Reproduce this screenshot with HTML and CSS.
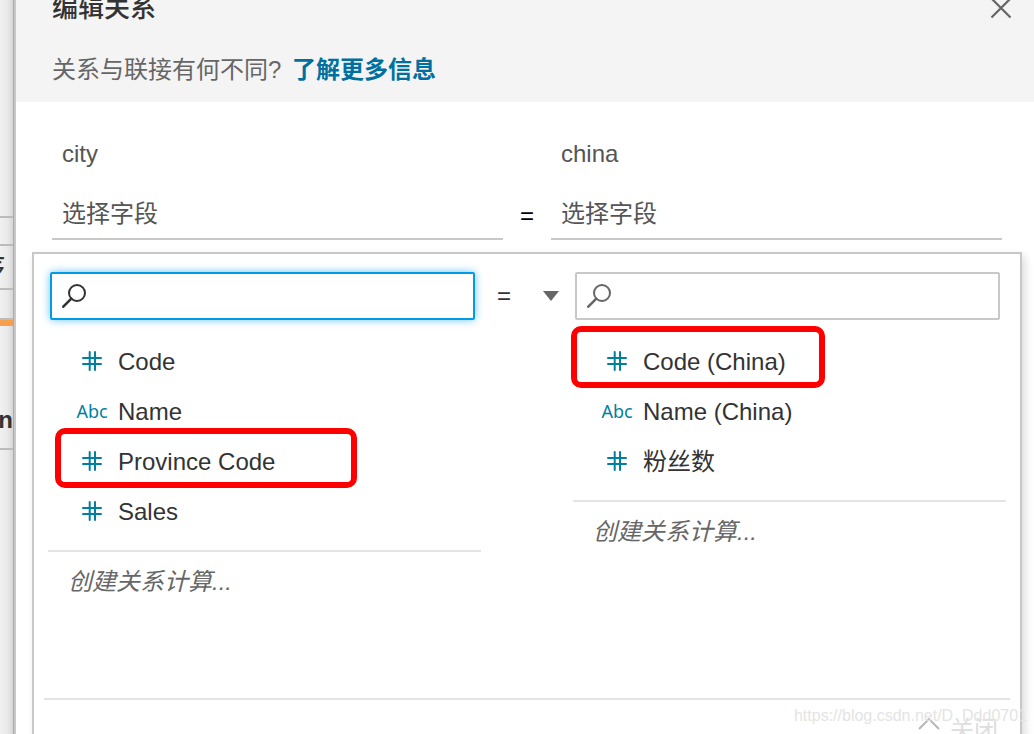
FILE: index.html
```html
<!DOCTYPE html>
<html lang="zh-CN">
<head>
<meta charset="utf-8">
<title>编辑关系</title>
<link rel="stylesheet" href="styles.css">
</head>
<body>
<svg class="symbols" aria-hidden="true">
  <symbol id="hash" viewBox="0 0 20 20"><path d="M7.7 1V19M13 1V19M1 7H19M1 13H19" fill="none" stroke="currentColor" stroke-width="2" stroke-linecap="round"/></symbol>
  <symbol id="search" viewBox="0 0 24 24"><circle cx="15" cy="9" r="8" fill="none" stroke="currentColor" stroke-width="2"/><path d="M9.3 14.7L1.3 22.7" fill="none" stroke="currentColor" stroke-width="2.6" stroke-linecap="round"/></symbol>
</svg>
<div class="app">
  <aside class="backdrop" aria-hidden="true">
    <div class="strip strip-top"></div>
    <div class="strip strip-gap"></div>
    <div class="strip strip-sort">序</div>
    <div class="strip strip-tab"></div>
    <div class="strip strip-accent"></div>
    <div class="strip strip-name">n</div>
  </aside>
  <main class="dialog">
    <header class="dialog-header">
      <div class="title-row">
        <h1 class="title">编辑关系</h1>
        <button class="close" aria-label="关闭对话框"><svg width="22" height="22" viewBox="0 0 22 22"><path d="M1.5 1.5L20.5 20.5M20.5 1.5L1.5 20.5" fill="none" stroke="currentColor" stroke-width="2.2"/></svg></button>
      </div>
      <p class="hint">关系与联接有何不同? <a class="learn" href="#more">了解更多信息</a></p>
    </header>
    <section class="relation">
      <div class="side">
        <label class="table-name" for="field-city">city</label>
        <select class="field" id="field-city"><option>选择字段</option></select>
      </div>
      <span class="equals">=</span>
      <div class="side">
        <label class="table-name" for="field-china">china</label>
        <select class="field" id="field-china"><option>选择字段</option></select>
      </div>
    </section>
    <section class="panel">
      <div class="columns">
        <div class="pane">
          <div class="search search-active">
            <svg class="search-icon"><use href="#search"/></svg>
            <input class="search-input" type="text" aria-label="搜索 city 字段">
          </div>
          <ul class="list">
            <li><button class="item"><span class="type"><svg class="hash"><use href="#hash"/></svg></span>Code</button></li>
            <li><button class="item"><span class="type">Abc</span>Name</button></li>
            <li><button class="item marked marked-wide"><span class="type"><svg class="hash"><use href="#hash"/></svg></span>Province Code</button></li>
            <li><button class="item"><span class="type"><svg class="hash"><use href="#hash"/></svg></span>Sales</button></li>
          </ul>
          <button class="create">创建关系计算...</button>
        </div>
        <div class="operator">
          <select class="operator-select" aria-label="运算符"><option>=</option></select>
          <svg class="caret" width="16" height="10" viewBox="0 0 16 10"><path d="M0 0H16L8 10Z" fill="currentColor"/></svg>
        </div>
        <div class="pane">
          <div class="search">
            <svg class="search-icon"><use href="#search"/></svg>
            <input class="search-input" type="text" aria-label="搜索 china 字段">
          </div>
          <ul class="list">
            <li><button class="item marked"><span class="type"><svg class="hash"><use href="#hash"/></svg></span>Code (China)</button></li>
            <li><button class="item"><span class="type">Abc</span>Name (China)</button></li>
            <li><button class="item"><span class="type"><svg class="hash"><use href="#hash"/></svg></span>粉丝数</button></li>
          </ul>
          <button class="create">创建关系计算...</button>
        </div>
      </div>
      <footer class="panel-footer">
        <button class="collapse"><svg width="22" height="12" viewBox="0 0 22 12"><path d="M1 11L11 1L21 11" fill="none" stroke="#b8b8b8" stroke-width="2"/></svg>关闭</button>
      </footer>
    </section>
  </main>
  <div class="watermark">https://blog.csdn.net/D_Ddd0701</div>
</div>
</body>
</html>
```
FILE: styles.css
```css
* { box-sizing: border-box; }
body {
  margin: 0;
  font-family: "Liberation Sans", "Noto Sans CJK SC", sans-serif;
  font-size: 24px;
  line-height: 32px;
  color: #333;
  background: #fff;
}
button, input, select {
  font: inherit;
  color: inherit;
  background: none;
  border: 0;
  border-radius: 0;
  margin: 0;
  padding: 0;
  outline: 0;
  appearance: none;
}
.symbols { position: absolute; width: 0; height: 0; }
.app {
  position: relative;
  display: flex;
  height: 100vh;
  overflow: hidden;
}

/* Workspace visible behind the dialog */
.backdrop {
  flex: 0 0 14px;
  overflow: hidden;
  background: linear-gradient(to right, #f1f1f1, #e8e8e8 60%, #d6d6d6);
  border-right: 1px solid #aaa;
}
.strip {
  display: flex;
  align-items: center;
  justify-content: flex-end;
  border-bottom: 2px solid #bbb;
}
.strip-top { height: 218px; }
.strip-gap { height: 28px; }
.strip-sort { height: 44px; padding-right: 8px; font-weight: 500; }
.strip-tab { height: 30px; }
.strip-accent { height: 6px; background: #f5a04e; border: 0; }
.strip-name { height: 124px; padding-top: 66px; font-weight: 700; }

.dialog {
  flex: 1;
  min-width: 0;
  display: flex;
  flex-direction: column;
  border-left: 2px solid #c8c8c8;
}
.dialog-header {
  padding: 0 22px 16px 36px;
  background: #f4f4f4;
}
.title-row {
  display: flex;
  align-items: center;
  justify-content: space-between;
  margin-top: -8px;
}
.title {
  margin: 0;
  font-size: 26px;
  font-weight: 500;
}
.close { display: flex; color: #666; }
.hint { margin: 30px 0 0; color: #666; }
.learn {
  margin-left: 4px;
  color: #0070a0;
  font-weight: 700;
  text-decoration: none;
}

.relation {
  display: grid;
  grid-template-columns: 1fr 48px 1fr;
  align-items: end;
  padding: 36px 32px 12px 36px;
}
.side { display: flex; flex-direction: column; gap: 20px; }
.table-name { padding-left: 10px; color: #555; }
.field {
  width: 100%;
  height: 50px;
  padding: 0 10px;
  border-bottom: 2px solid #c8c8c8;
  color: #555;
}
.equals { padding-bottom: 8px; text-align: center; color: #000; }

.panel {
  flex: 1;
  margin: 0 12px 0 16px;
  padding: 18px 10px 0;
  border: 2px solid #c8c8c8;
  border-bottom: 0;
  box-shadow: 3px 4px 8px rgba(0, 0, 0, 0.14);
}
.columns {
  display: grid;
  grid-template-columns: 1fr 92px 1fr;
  min-height: 426px;
  padding: 0 4px;
}
.search {
  display: flex;
  align-items: center;
  gap: 8px;
  height: 48px;
  margin: 0 6px 0 2px;
  padding: 0 10px;
  border: 2px solid #c8c8c8;
  border-radius: 2px;
  color: #666;
}
.search-active {
  border-color: #009de6;
  box-shadow: 0 0 8px #6cc4f2;
  color: #333;
}
.search-icon { flex: none; width: 24px; height: 24px; }
.search-input { flex: 1; min-width: 0; }
.list {
  margin: 0;
  padding: 17px 0 13px;
  list-style: none;
  border-bottom: 2px solid #e4e4e4;
}
.item {
  position: relative;
  display: flex;
  align-items: center;
  gap: 10px;
  width: 100%;
  height: 50px;
  padding-left: 28px;
  text-align: left;
}
.type {
  flex: none;
  display: flex;
  justify-content: center;
  width: 32px;
  padding-bottom: 2px;
  font-family: "Noto Sans", sans-serif;
  font-size: 18px;
  color: #007f9f;
}
.hash { width: 20px; height: 20px; }
.marked::after {
  content: "";
  position: absolute;
  box-sizing: border-box;
  top: -11px;
  left: -2px;
  width: 254px;
  height: 62px;
  border: 6px solid #f00;
  border-radius: 10px;
}
.marked-wide::after { top: -9px; left: 7px; width: 302px; height: 60px; }
.create {
  height: 60px;
  padding-left: 20px;
  font-style: italic;
  color: #666;
}
.operator {
  display: flex;
  align-items: center;
  height: 48px;
  padding: 0 14px 0 16px;
}
.operator-select { flex: 1; min-width: 0; }
.caret { flex: none; color: #666; }
.panel-footer {
  display: flex;
  justify-content: flex-end;
  padding: 14px 12px 0 0;
  border-top: 2px solid #e4e4e4;
}
.collapse {
  display: flex;
  align-items: flex-start;
  gap: 10px;
  color: #ddd;
}
.collapse svg { margin-top: 4px; }

.watermark {
  position: absolute;
  right: 7px;
  bottom: 2px;
  font-size: 16px;
  color: #e4e4e4;
}
```
